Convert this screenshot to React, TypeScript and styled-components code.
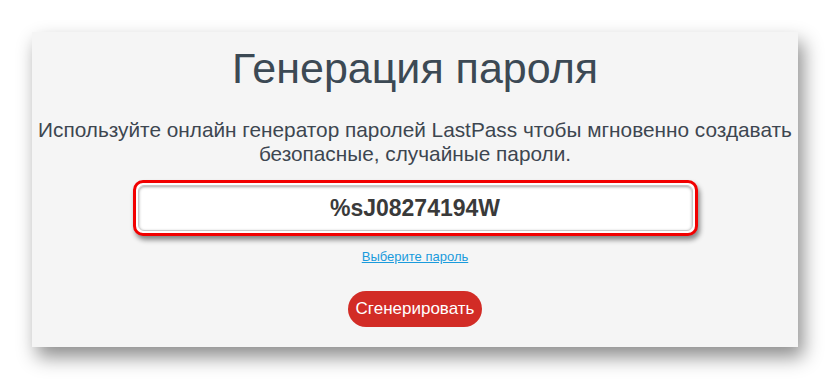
import styled, { createGlobalStyle } from 'styled-components';

const GlobalStyle = createGlobalStyle`
  html, body {
    margin: 0;
    padding: 0;
    background: #ffffff;
  }
`;

const Page = styled.div`
  padding: 32px;
  box-sizing: border-box;
  width: 830px;
  height: 379px;
`;

const Card = styled.section`
  width: 766px;
  height: 315px;
  box-sizing: border-box;
  background: #f5f5f5;
  box-shadow: 5px 10px 18px rgba(0, 0, 0, 0.45);
  display: flex;
  flex-direction: column;
  align-items: center;
  padding-top: 11px;
`;

const Title = styled.h1`
  margin: 0;
  font-family: 'Liberation Sans', Arial, sans-serif;
  font-weight: 400;
  font-size: 43px;
  line-height: 50px;
  color: #3c4954;
`;

const Lead = styled.p`
  margin: 25px 0 0;
  font-family: 'Liberation Sans', Arial, sans-serif;
  font-size: 20.8px;
  line-height: 24px;
  color: #3d4650;
  text-align: center;
  white-space: nowrap;
`;

const Highlight = styled.div`
  margin-top: 14px;
  width: 565px;
  height: 56px;
  box-sizing: border-box;
  border: 3px solid #f20000;
  border-radius: 10px;
  padding: 2px;
  background: #ffffff;
  box-shadow: 2px 4px 5px rgba(0, 0, 0, 0.45);
`;

const Field = styled.div`
  height: 100%;
  box-sizing: border-box;
  border: 1px solid #c9c9c9;
  border-radius: 6px;
  box-shadow: inset 0 1px 3px rgba(0, 0, 0, 0.35);
  display: flex;
  align-items: center;
  justify-content: center;
  font-family: 'Liberation Sans', Arial, sans-serif;
  font-weight: 700;
  font-size: 23px;
  color: #3a3a3a;
`;

const Link = styled.a`
  margin-top: 13px;
  font-family: 'Liberation Sans', Arial, sans-serif;
  font-size: 13px;
  line-height: 16px;
  color: #1a9bdc;
  text-decoration: underline;
`;

const Button = styled.button`
  margin-top: 26px;
  height: 36px;
  padding: 0 8px;
  border: none;
  border-radius: 18px;
  background: #d22c26;
  color: #ffffff;
  font-family: 'Liberation Sans', Arial, sans-serif;
  font-size: 17px;
`;

export default function App() {
  return (
    <>
      <GlobalStyle />
      <Page>
        <Card>
          <Title>Генерация пароля</Title>
          <Lead>
            Используйте онлайн генератор паролей LastPass чтобы мгновенно создавать
            <br />
            безопасные, случайные пароли.
          </Lead>
          <Highlight>
            <Field>%sJ08274194W</Field>
          </Highlight>
          <Link href="#">Выберите пароль</Link>
          <Button>Сгенерировать</Button>
        </Card>
      </Page>
    </>
  );
}
